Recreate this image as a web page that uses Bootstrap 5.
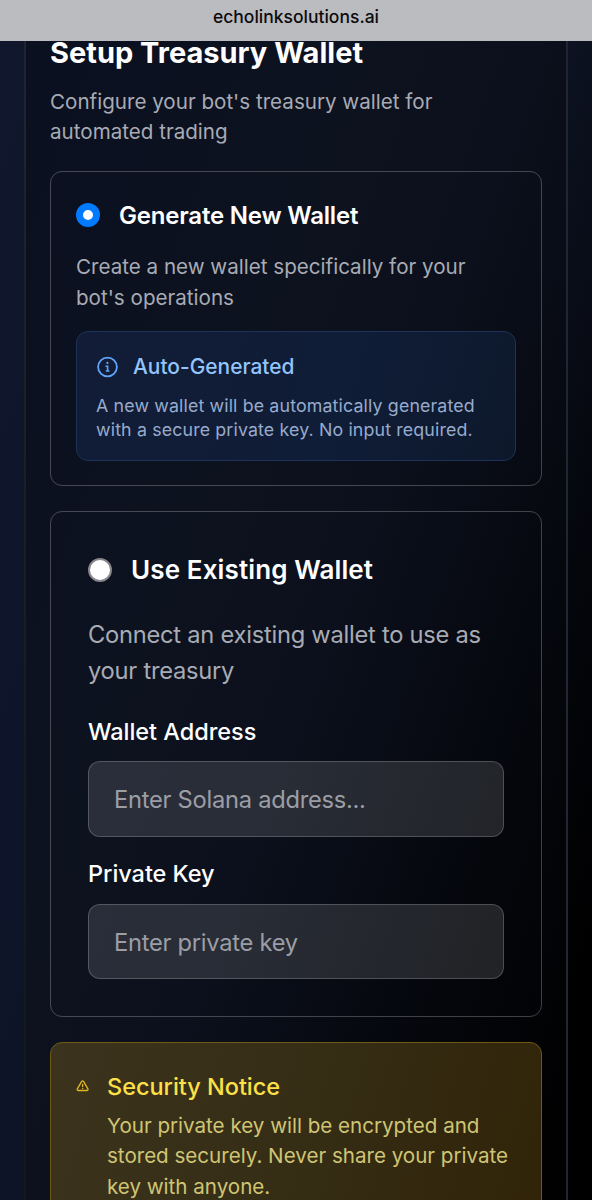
<!DOCTYPE html>
<html lang="en" data-bs-theme="dark">
<head>
<meta charset="utf-8">
<meta name="viewport" content="width=device-width, initial-scale=1">
<title>Setup Treasury Wallet</title>
<link href="https://cdn.jsdelivr.net/npm/bootstrap@5.3.0/dist/css/bootstrap.min.css" rel="stylesheet">
<style>
body{font-family:Inter,"Liberation Sans",sans-serif;height:1200px;overflow:hidden;background:linear-gradient(110deg,#11172c 0%,#0e152a 33%,#0d1424 54%,#0a0e1a 64%,#04050a 78%,#000 92%)}
.urlbar{height:41px;background:#bbbcc0;color:#0b0b0d;font-size:17.5px;font-weight:500;line-height:34px;z-index:2}
.panel{margin:-6px 24px 0;height:1165px;overflow:hidden;border:2px solid rgba(255,255,255,.09);border-width:0 2px;padding:0 24px;background:linear-gradient(110deg,#0a1020 0%,#0d121f 36%,#0c101c 54%,#080b14 67%,#04060b 80%,#010102 96%)}
.h-main{font-size:29px;font-weight:700;line-height:36px;color:#fff}
.t-line{display:block;white-space:nowrap}
.sub{font-size:20.6px;line-height:30.3px;color:#a8abb4}
.box{border:1.5px solid rgba(255,255,255,.24);border-radius:12px}
.box-a{height:315px;padding:25px 25px 0}
.box-b{height:506px;padding:37px 37px 0}
.radio-dot{width:24px;height:24px;border-radius:50%;flex:none;background:#fff}
.radio-on{border:7px solid #007aff}
.radio-off{border:2px solid #88868b}
.opt-a{font-size:24px;font-weight:600;line-height:37px;color:#fff;letter-spacing:-.2px;margin-left:19px}
.opt-b{font-size:26px;font-weight:600;line-height:42px;color:#fff;letter-spacing:.12px;margin-left:19px}
.sub-b{font-size:23.7px;line-height:36.4px;letter-spacing:-.25px;color:#a8abb4}
.infobox{height:130px;padding:20px 19px 0;border:1.5px solid #1b3359;border-radius:12px;background:linear-gradient(107deg,#121c36,#101d37 60%,#0d182b)}
.info-title{font-size:20.9px;font-weight:500;line-height:30px;color:#93c5fd;letter-spacing:.02px;margin-left:15px}
.info-text{font-size:17.8px;line-height:24.3px;color:#97abcd;letter-spacing:.14px}
.lab{font-size:23.5px;font-weight:500;line-height:36px;color:#fff;letter-spacing:-.04px}
.field{height:75.5px;border:1.5px solid rgba(255,255,255,.2);border-radius:12px;padding:1px 25px 0;font-size:23.7px;letter-spacing:-.26px}
.field,.field:focus{color:#fff;box-shadow:none;background:rgba(255,255,255,.12)}
.field::placeholder{color:#9c9ea5;opacity:1}
.notice{height:220px;padding:26px 24px 0 25px;border:1.5px solid #6f5a15;border-radius:12px;background:linear-gradient(107deg,#3b331d,#352c14 55%,#302307)}
.notice-title{font-size:23.5px;font-weight:500;line-height:36px;color:#fde047;letter-spacing:-.03px}
.notice-text{font-size:20.6px;line-height:30.3px;color:#cfc574;letter-spacing:-.01px}
</style>
</head>
<body>
<div class="urlbar text-center position-relative">echolinksolutions.ai</div>
<main class="panel">
  <h1 class="h-main mb-0">Setup Treasury Wallet</h1>
  <p class="sub mb-0 pt-3"><span class="t-line">Configure your bot's treasury wallet for</span><span class="t-line">automated trading</span></p>

  <section class="box box-a" style="margin-top:23.4px">
    <label class="d-flex align-items-center">
      <span class="radio-dot radio-on"></span><span class="opt-a">Generate New Wallet</span>
    </label>
    <p class="sub mb-0" style="margin-top:18.4px"><span class="t-line">Create a new wallet specifically for your</span><span class="t-line">bot's operations</span></p>
    <div class="infobox" style="margin-top:17.6px">
      <div class="d-flex align-items-center">
        <svg width="22" height="22" viewBox="0 0 22 22" fill="none" stroke="#60a5fa" stroke-width="1.8"><circle cx="11.5" cy="11" r="9.4"/><path d="M9.5 10.2H11.6V14.8M9.8 15H13.4" stroke-width="1.6"/><circle cx="11.4" cy="6.9" r="1.1" fill="#60a5fa" stroke="none"/></svg>
        <span class="info-title">Auto-Generated</span>
      </div>
      <p class="info-text mb-0" style="margin-top:12px"><span class="t-line">A new wallet will be automatically generated</span><span class="t-line">with a secure private key. No input required.</span></p>
    </div>
  </section>

  <section class="box box-b" style="margin-top:25px">
    <label class="d-flex align-items-center">
      <span class="radio-dot radio-off"></span><span class="opt-b">Use Existing Wallet</span>
    </label>
    <p class="sub-b mb-0" style="margin-top:26px"><span class="t-line">Connect an existing wallet to use as</span><span class="t-line">your treasury</span></p>
    <label class="lab d-block" for="addr" style="margin-top:24px">Wallet Address</label>
    <input class="form-control field" id="addr" type="text" placeholder="Enter Solana address..." style="margin-top:11.5px">
    <label class="lab d-block" for="pkey" style="margin-top:19.5px">Private Key</label>
    <input class="form-control field" id="pkey" type="text" placeholder="Enter private key" style="margin-top:11.5px">
  </section>

  <section class="notice d-flex align-items-start" style="margin-top:25px">
    <svg class="flex-shrink-0" style="margin-top:10px" width="14" height="14" viewBox="0 0 14 14" fill="none" stroke="#e0b923" stroke-width="1.3" stroke-linejoin="round" stroke-linecap="round"><path d="M5.7 2.4Q6.6 1.2 7.5 2.4L11.9 9.8Q12.4 11.4 11 11.5H2.2Q.8 11.4 1.3 9.8Z"/><path d="M6.6 5.4V7.4M6.6 9.3V9.4"/></svg>
    <div style="margin-left:17px">
      <div class="notice-title">Security Notice</div>
      <p class="notice-text mb-0" style="padding-top:6px"><span class="t-line">Your private key will be encrypted and</span><span class="t-line">stored securely. Never share your private</span><span class="t-line">key with anyone.</span></p>
    </div>
  </section>
</main>
<script src="https://cdn.jsdelivr.net/npm/bootstrap@5.3.0/dist/js/bootstrap.bundle.min.js"></script>
</body>
</html>
